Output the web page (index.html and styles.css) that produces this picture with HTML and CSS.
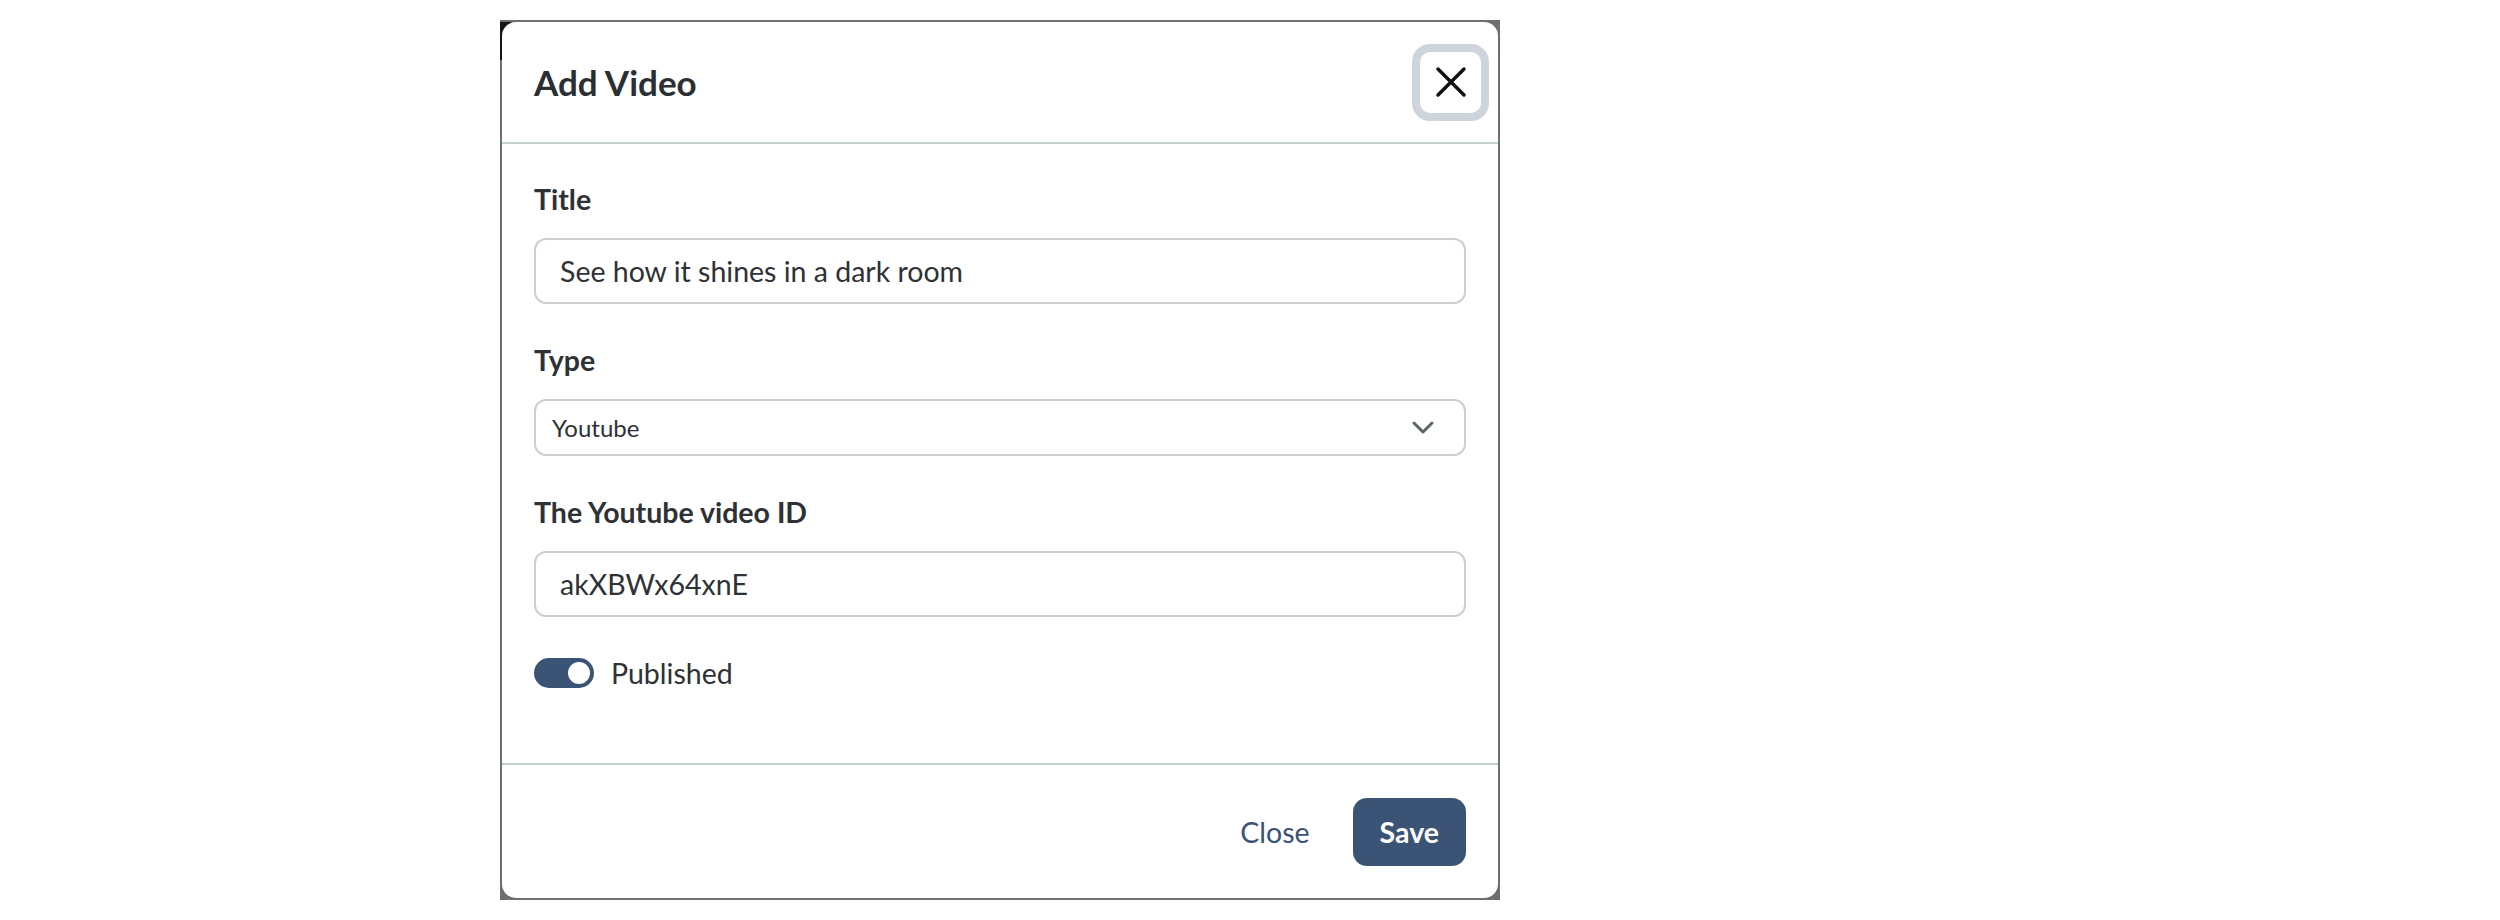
FILE: index.html
```html
<!DOCTYPE html>
<html>
<head>
<meta charset="utf-8">
<title>Add Video</title>
<link rel="stylesheet" href="styles.css">
</head>
<body>
<div class="page">
  <div class="modal-frame">
    <div class="modal-content">
      <div class="modal-header">
        <h5 class="modal-title">Add Video</h5>
        <button class="btn-close" type="button" aria-label="Close">
          <svg width="32" height="32" viewBox="0 0 32 32"><path d="M3 3L29 29M29 3L3 29" stroke="#111" stroke-width="3.5" stroke-linecap="round" fill="none"/></svg>
        </button>
      </div>
      <div class="modal-body">
        <div class="field">
          <label class="form-label" for="title">Title</label>
          <input class="form-control" id="title" type="text" value="See how it shines in a dark room">
        </div>
        <div class="field">
          <label class="form-label">Type</label>
          <div class="form-select">
            <span>Youtube</span>
            <svg width="22" height="13" viewBox="0 0 22 13"><path d="M2 2L11 11L20 2" stroke="#5b6567" stroke-width="3" stroke-linecap="round" stroke-linejoin="round" fill="none"/></svg>
          </div>
        </div>
        <div class="field">
          <label class="form-label" for="vid">The Youtube video ID</label>
          <input class="form-control" id="vid" type="text" value="akXBWx64xnE">
        </div>
        <div class="form-switch">
          <span class="switch"><span class="knob"></span></span>
          <span>Published</span>
        </div>
      </div>
      <div class="modal-footer">
        <button class="btn btn-link" type="button">Close</button>
        <button class="btn btn-primary" type="button">Save</button>
      </div>
    </div>
  </div>
</div>
</body>
</html>
```

FILE: styles.css
```css
/* Add Video modal */

html, body
{ margin: 0;
background: #fff;
}

body
{ font-family: "Lato", "Noto Sans", sans-serif;
color: #2e3135;
}

.page
{ display: flex;
align-items: flex-start;
padding: 20px 0 0 500px;
}

.modal-frame
{ width: 1000px;
height: 880px;
box-sizing: border-box;
padding: 2px;
display: flex;
background: linear-gradient(#151515, #151515) 0 2px / 12px 38px no-repeat, #6c706f;
}

.modal-content
{ flex: 1;
display: flex;
flex-direction: column;
background: #fff;
border-radius: 14px;
}

.modal-header
{ height: 120px;
display: flex;
align-items: center;
justify-content: space-between;
padding: 0 9px 0 32px;
border-bottom: 2px solid #c3d0cf;
}

.modal-title
{ margin: 0;
font-size: 35px;
font-weight: 700;
line-height: 1;
color: #2c2f32;
}

.btn-close
{ width: 77px;
height: 77px;
box-sizing: border-box;
padding: 0;
display: flex;
align-items: center;
justify-content: center;
border: 8px solid #cdd4dc;
border-radius: 18px;
background: #fff;
}

.modal-body
{ flex: 1;
padding: 33px 32px 32px;
}

.field + .field
{ margin-top: 34px;
}

.form-label
{ display: block;
font-size: 28.5px;
font-weight: 700;
line-height: 44px;
margin-bottom: 17px;
}

.form-control
{ display: block;
width: 100%;
height: 66px;
box-sizing: border-box;
padding: 0 24px;
border: 2px solid #c9d0ce;
border-radius: 12px;
font-family: inherit;
font-size: 28.5px;
color: #2e3135;
background: #fff;
outline: none;
}

.form-select
{ height: 57px;
box-sizing: border-box;
display: flex;
align-items: center;
justify-content: space-between;
padding: 0 30px 0 16px;
border: 2px solid #c9d0ce;
border-radius: 12px;
font-size: 24px;
}

.form-switch
{ margin-top: 41px;
display: flex;
align-items: center;
gap: 17px;
font-size: 28.5px;
line-height: 30px;
}

.switch
{ width: 60px;
height: 30px;
box-sizing: border-box;
padding: 0 4px;
display: flex;
align-items: center;
justify-content: flex-end;
border-radius: 15px;
background: #3b5374;
}

.knob
{ width: 22px;
height: 22px;
border-radius: 50%;
background: #fff;
}

.modal-footer
{ height: 133px;
display: flex;
align-items: center;
justify-content: flex-end;
gap: 16px;
padding: 0 32px;
border-top: 2px solid #c3d0cf;
}

.btn
{ height: 68px;
padding: 0 27px;
border: 0;
border-radius: 14px;
font-family: inherit;
font-size: 28.5px;
}

.btn-link
{ background: none;
color: #3b5374;
}

.btn-primary
{ background: #3b5374;
color: #fff;
font-weight: 700;
}
```
